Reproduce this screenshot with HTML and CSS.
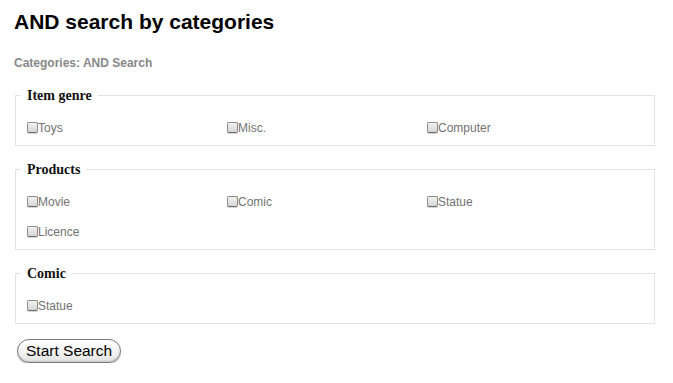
FILE: index.html
```html
<!DOCTYPE html>
<html lang="en">
<head>
<meta charset="utf-8">
<title>AND search by categories</title>
<link rel="stylesheet" href="styles.css">
</head>
<body>
<div class="page">
  <h1 class="title">AND search by categories</h1>
  <p class="subtitle">Categories: AND Search</p>
  <form class="search">
    <fieldset class="group">
      <legend class="group-title">Item genre</legend>
      <div class="options">
        <label class="option"><input type="checkbox" class="check">Toys</label>
        <label class="option"><input type="checkbox" class="check">Misc.</label>
        <label class="option"><input type="checkbox" class="check">Computer</label>
      </div>
    </fieldset>
    <fieldset class="group">
      <legend class="group-title">Products</legend>
      <div class="options">
        <label class="option"><input type="checkbox" class="check">Movie</label>
        <label class="option"><input type="checkbox" class="check">Comic</label>
        <label class="option"><input type="checkbox" class="check">Statue</label>
        <label class="option"><input type="checkbox" class="check">Licence</label>
      </div>
    </fieldset>
    <fieldset class="group">
      <legend class="group-title">Comic</legend>
      <div class="options">
        <label class="option"><input type="checkbox" class="check">Statue</label>
      </div>
    </fieldset>
    <button type="button" class="submit">Start Search</button>
  </form>
</div>
</body>
</html>
```

FILE: styles.css
```css
html, body {
  margin: 0;
  padding: 0;
  background: #ffffff;
}

.page {
  padding: 10px 14px 0 14px;
  font-family: "Liberation Sans", Arial, sans-serif;
}

.title {
  margin: 0;
  font-size: 21px;
  line-height: 24px;
  font-weight: bold;
  color: #000000;
}

.subtitle {
  margin: 22px 0 0 0;
  font-size: 12px;
  line-height: 14px;
  font-weight: bold;
  color: #888888;
}

.search {
  margin: 17px 0 0 0;
}

.group {
  box-sizing: border-box;
  width: 640px;
  margin: 0 0 15px 1px;
  padding: 9px 5px 2px 5px;
  border: 1px solid #e2e2e2;
  min-inline-size: 0;
}

.group-title {
  padding: 0 6px;
  font-family: "Liberation Serif", Georgia, serif;
  font-size: 14px;
  line-height: 17px;
  font-weight: bold;
  color: #111111;
}

.options {
  display: flex;
  flex-wrap: wrap;
  padding-left: 6px;
}

.option {
  width: 200px;
  height: 30px;
  line-height: 30px;
  font-size: 12px;
  color: #737373;
  white-space: nowrap;
}

.check {
  -webkit-appearance: none;
  appearance: none;
  box-sizing: border-box;
  width: 11px;
  height: 11px;
  margin: 0;
  vertical-align: middle;
  position: relative;
  top: -1px;
  border: 1px solid #8c8c8c;
  border-bottom-color: #6e6e6e;
  border-radius: 2px;
  background: linear-gradient(#f2f2f2, #d6d6d6);
  box-shadow: 0 1px 1px rgba(0, 0, 0, 0.18);
}

.submit {
  display: block;
  margin: 5px 0 0 3px;
  padding: 0 8px;
  height: 24px;
  line-height: 22px;
  font-family: "Liberation Sans", Arial, sans-serif;
  font-size: 15.5px;
  color: #000000;
  border: 1px solid #7a7a7a;
  border-radius: 12px;
  background: linear-gradient(#ffffff 0%, #f4f4f4 50%, #e2e2e2 100%);
  box-shadow: inset 0 -1px 2px rgba(0, 0, 0, 0.12), 0 1px 1px rgba(0, 0, 0, 0.25);
}
```
